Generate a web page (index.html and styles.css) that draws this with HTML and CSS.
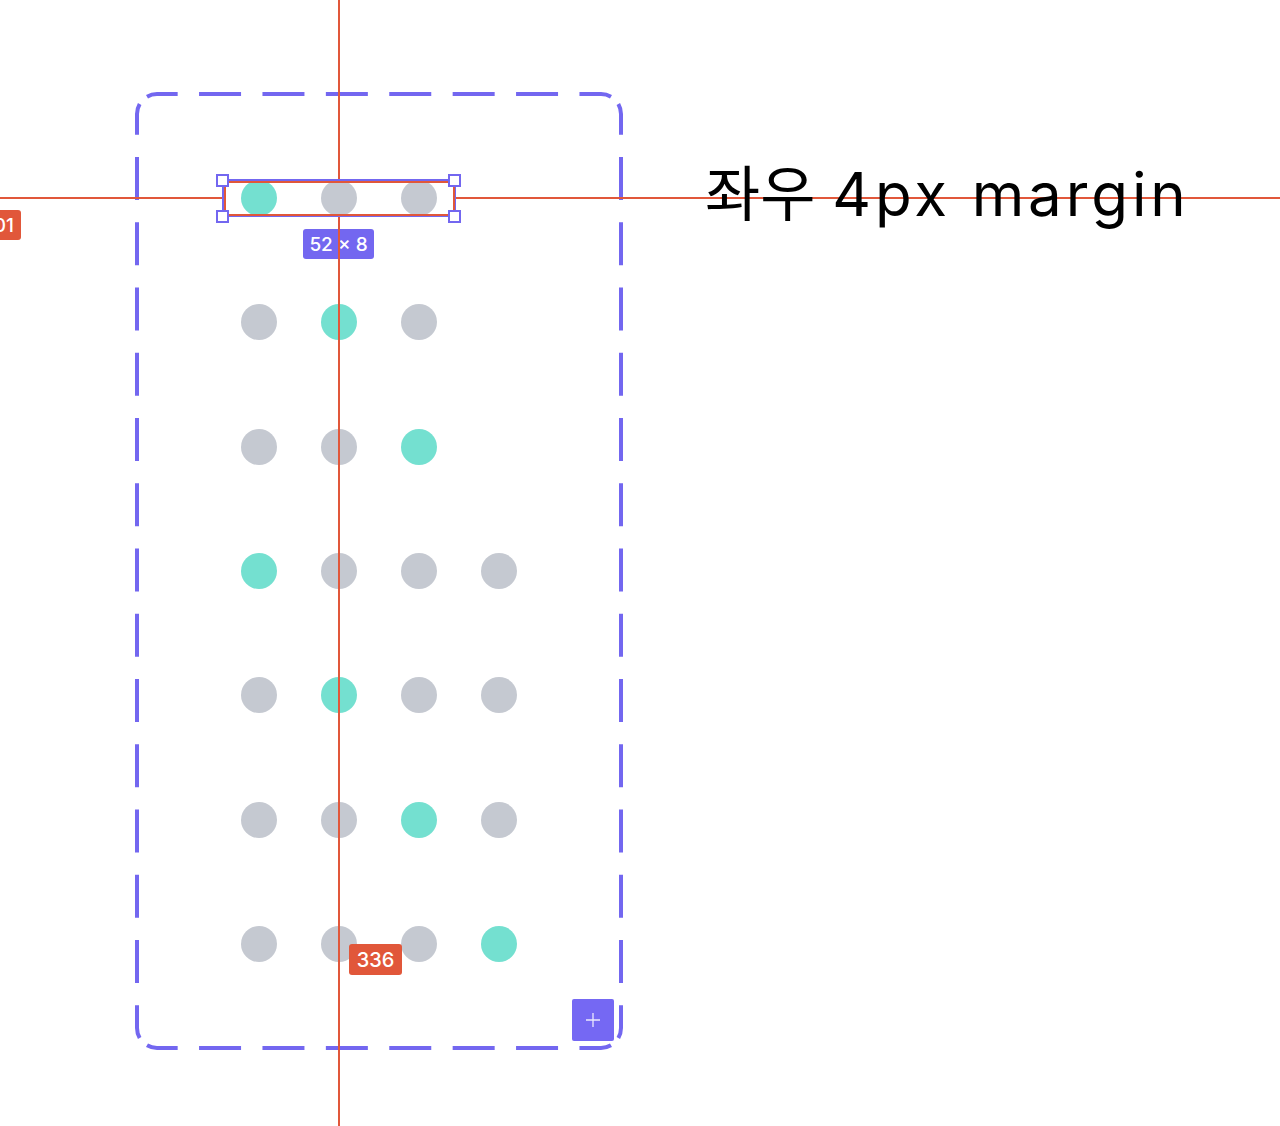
FILE: index.html
```html
<!DOCTYPE html>
<html lang="ko">
<head>
<meta charset="utf-8">
<title>좌우 4px margin</title>
<link rel="stylesheet" href="styles.css">
</head>
<body>
<div class="canvas">
  <div class="frame">
    <svg class="frame-border" width="488" height="958" viewBox="135 92 488 958" aria-hidden="true">
      <path class="dash-h" d="M147 96.68 A20 20 0 0 1 157 94 L601 94 A20 20 0 0 1 611 96.68"/>
      <path class="dash-h" d="M147 1045.32 A20 20 0 0 0 157 1048 L601 1048 A20 20 0 0 0 611 1045.32"/>
      <path class="dash-v" d="M139.68 104 A20 20 0 0 0 137 114 L137 1028 A20 20 0 0 0 139.68 1038"/>
      <path class="dash-v" d="M618.32 104 A20 20 0 0 1 621 114 L621 1028 A20 20 0 0 1 618.32 1038"/>
    </svg>
    <div class="rows">
      <div class="row"><span class="dot on"></span><span class="dot"></span><span class="dot"></span></div>
      <div class="row"><span class="dot"></span><span class="dot on"></span><span class="dot"></span></div>
      <div class="row"><span class="dot"></span><span class="dot"></span><span class="dot on"></span></div>
      <div class="row"><span class="dot on"></span><span class="dot"></span><span class="dot"></span><span class="dot"></span></div>
      <div class="row"><span class="dot"></span><span class="dot on"></span><span class="dot"></span><span class="dot"></span></div>
      <div class="row"><span class="dot"></span><span class="dot"></span><span class="dot on"></span><span class="dot"></span></div>
      <div class="row"><span class="dot"></span><span class="dot"></span><span class="dot"></span><span class="dot on"></span></div>
    </div>
    <div class="add-btn">
      <svg width="16" height="16" viewBox="0 0 16 16" aria-hidden="true"><path d="M8 1 V15 M1 8 H15" stroke="rgba(255,255,255,0.85)" stroke-width="1.3" fill="none"/></svg>
    </div>
  </div>

  <div class="guide guide-v guide-v-top"></div>
  <div class="guide guide-v guide-v-bottom"></div>
  <div class="guide guide-h guide-h-left"></div>
  <div class="guide guide-h guide-h-right"></div>

  <div class="sel-blue"></div>
  <div class="sel-red"></div>
  <span class="handle h-tl"></span>
  <span class="handle h-tr"></span>
  <span class="handle h-bl"></span>
  <span class="handle h-br"></span>

  <div class="tag tag-size">52 × 8</div>
  <div class="guide guide-v guide-v-label"></div>
  <div class="tag tag-red tag-336">336</div>
  <div class="tag tag-red tag-left">101</div>

  <div class="note">좌우 <span class="note-latin">4px margin</span></div>
</div>
</body>
</html>
```

FILE: styles.css
```css
html, body {
  margin: 0;
  padding: 0;
  background: #ffffff;
}

body {
  width: 1280px;
  height: 1126px;
  overflow: hidden;
  font-family: Inter, "Noto Sans CJK KR", sans-serif;
}

.canvas {
  position: relative;
  width: 1280px;
  height: 1126px;
  overflow: hidden;
}

.frame {
  position: absolute;
  left: 135px;
  top: 92px;
  width: 488px;
  height: 958px;
}

.frame-border {
  position: absolute;
  left: 0;
  top: 0;
  overflow: visible;
}

.frame-border path {
  fill: none;
  stroke: #7367F0;
  stroke-width: 4;
}

.dash-h {
  stroke-dasharray: 42 21.4;
  stroke-dashoffset: 10.9;
}

.dash-v {
  stroke-dasharray: 43 22.25;
  stroke-dashoffset: 11.78;
}

.rows {
  position: relative;
  display: flex;
  flex-direction: column;
  gap: 88.33px;
  padding: 88px 0 0 89px;
}

.row {
  display: flex;
  gap: 44px;
  padding: 0 17px;
  height: 36px;
  align-items: center;
}

.dot {
  width: 36px;
  height: 36px;
  border-radius: 50%;
  background: #C5C9D1;
}

.dot.on {
  background: #74E0D0;
}

.add-btn {
  position: absolute;
  left: 437px;
  top: 907px;
  width: 42px;
  height: 42px;
  border-radius: 2px;
  background: #7568F3;
  display: flex;
  align-items: center;
  justify-content: center;
}

.guide {
  position: absolute;
  background: #E1573A;
}

.guide-v {
  left: 338px;
  width: 2px;
}

.guide-v-top {
  top: 0;
  height: 180px;
}

.guide-v-bottom {
  top: 217px;
  height: 909px;
}

.guide-h {
  top: 197px;
  height: 2px;
}

.guide-h-left {
  left: 0;
  width: 222px;
}

.guide-h-right {
  left: 456px;
  width: 824px;
}

.sel-blue {
  position: absolute;
  left: 222px;
  top: 179px;
  width: 234px;
  height: 38px;
  box-sizing: border-box;
  border: 2px solid #7367F0;
}

.sel-red {
  position: absolute;
  left: 224px;
  top: 181px;
  width: 231px;
  height: 35px;
  box-sizing: border-box;
  border: 2px solid #E1573A;
}

.handle {
  position: absolute;
  width: 13px;
  height: 13px;
  box-sizing: border-box;
  border: 2px solid #7367F0;
  background: #ffffff;
}

.h-tl { left: 216px; top: 174px; }
.h-tr { left: 448px; top: 174px; }
.h-bl { left: 216px; top: 210px; }
.h-br { left: 448px; top: 210px; }

.tag {
  position: absolute;
  display: flex;
  align-items: center;
  justify-content: center;
  color: #ffffff;
  font-family: Inter, sans-serif;
  font-weight: 500;
  font-size: 19px;
  border-radius: 3px;
  box-sizing: border-box;
}

.tag-size {
  left: 303px;
  top: 229px;
  width: 71px;
  height: 30px;
  background: #7367F0;
}

.guide-v-label {
  top: 229px;
  height: 30px;
}

.tag-red {
  background: #E1573A;
}

.tag-336 {
  left: 349px;
  top: 944px;
  width: 53px;
  height: 31px;
  font-size: 20px;
}

.tag-left {
  left: -30px;
  top: 210px;
  width: 51px;
  height: 30px;
  justify-content: flex-end;
  padding-right: 7px;
  font-size: 19px;
}

.note {
  position: absolute;
  left: 705px;
  top: 164px;
  font-family: Inter, "Noto Sans CJK KR", sans-serif;
  font-weight: 400;
  font-size: 60px;
  line-height: 60px;
  color: #000000;
  white-space: nowrap;
}

.note-latin {
  letter-spacing: 3.9px;
}
```
